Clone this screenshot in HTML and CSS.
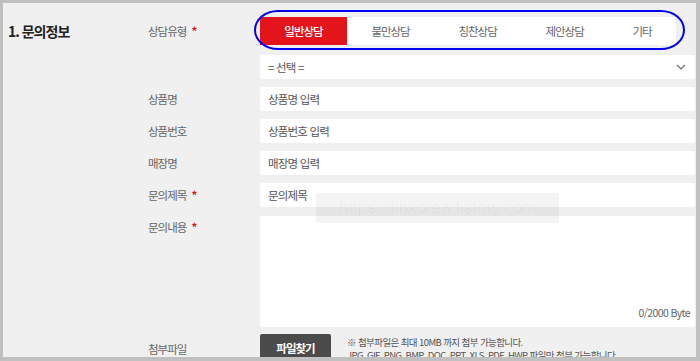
FILE: index.html
```html
<!DOCTYPE html>
<html lang="ko">
<head>
  <meta charset="UTF-8">
  <meta name="viewport" content="width=device-width, initial-scale=1.0">
  <title>문의정보</title>
  <link rel="stylesheet" href="styles.css">
</head>
<body>
  <div class="frame">
    <section class="inquiry">
      <h2 class="section-title">1. 문의정보</h2>

      <div class="form">
        <div class="form-row tab-row">
          <div class="label">상담유형 <span class="req">*</span></div>
          <div class="field">
            <div class="tabs">
              <div class="tab active">일반상담</div>
              <div class="tab">불만상담</div>
              <div class="tab">칭찬상담</div>
              <div class="tab">제안상담</div>
              <div class="tab">기타</div>
            </div>
            <div class="highlight"></div>
          </div>
        </div>

        <div class="form-row">
          <div class="label"></div>
          <div class="field">
            <div class="input select">
              <span>= 선택 =</span>
              <svg class="chevron" width="10" height="6" viewBox="0 0 10 6">
                <path d="M1 1 L5 5 L9 1" fill="none" stroke="#666" stroke-width="1.1"/>
              </svg>
            </div>
          </div>
        </div>

        <div class="form-row">
          <div class="label">상품명</div>
          <div class="field"><div class="input">상품명 입력</div></div>
        </div>

        <div class="form-row">
          <div class="label">상품번호</div>
          <div class="field"><div class="input">상품번호 입력</div></div>
        </div>

        <div class="form-row">
          <div class="label">매장명</div>
          <div class="field"><div class="input">매장명 입력</div></div>
        </div>

        <div class="form-row">
          <div class="label">문의제목 <span class="req">*</span></div>
          <div class="field"><div class="input">문의제목</div></div>
        </div>

        <div class="form-row">
          <div class="label">문의내용 <span class="req">*</span></div>
          <div class="field">
            <div class="textarea">
              <div class="textarea-body"></div>
              <div class="counter">0/2000 Byte</div>
            </div>
          </div>
        </div>

        <div class="form-row file-row">
          <div class="label">첨부파일</div>
          <div class="field file-field">
            <button class="file-button">파일찾기</button>
            <div class="file-note">
              <p>※ 첨부파일은 최대 10MB 까지 첨부 가능합니다.</p>
              <p>JPG, GIF, PNG, BMP, DOC, PPT, XLS, PDF, HWP 파일만 첨부 가능합니다.</p>
            </div>
          </div>
        </div>
      </div>

      <div class="watermark">https://finkorea.tistory.com</div>
    </section>
  </div>
</body>
</html>
```

FILE: styles.css
```css
body {
  margin: 0;
  font-family: "Noto Sans CJK KR", "Noto Sans", sans-serif;
  background-color: #fff;
}

.frame {
  width: 700px;
  height: 361px;
  box-sizing: border-box;
  border-style: solid;
  border-color: #c0c0c0;
  border-width: 3px 4px 4px 3px;
  background-color: #f0f0f0;
  overflow: hidden;
}

.inquiry {
  position: relative;
  display: grid;
  grid-template-columns: 145px 1fr;
  padding: 14px 1px 0 0;
}

.section-title {
  margin: 0;
  padding-left: 5px;
  font-size: 14px;
  font-weight: bold;
  line-height: 28px;
  letter-spacing: -1px;
  color: #222;
}

.form {
  display: flex;
  flex-direction: column;
  gap: 8px;
}

.form-row {
  display: grid;
  grid-template-columns: 112px 1fr;
}

.tab-row {
  margin-bottom: 2px;
}

.label {
  font-size: 11.5px;
  line-height: 24px;
  letter-spacing: -1px;
  color: #666;
}

.tab-row .label,
.file-row .label {
  line-height: 28px;
}

.req {
  margin-left: 3px;
  color: #e4141b;
  font-weight: bold;
}

.field {
  position: relative;
}

/* consult type tabs */
.tabs {
  display: flex;
  height: 28px;
  margin-right: 19px;
  background-color: #fff;
}

.tab {
  flex: 1 1 auto;
  font-size: 11.5px;
  line-height: 28px;
  letter-spacing: -1px;
  text-align: center;
  color: #666;
}

.tab.active {
  background-color: #e4141b;
  color: #fff;
  font-weight: 500;
}

.highlight {
  position: absolute;
  left: -6px;
  top: -7px;
  width: 427px;
  height: 36px;
  border: 2px solid #0000f0;
  border-radius: 24px / 20px;
}

/* inputs */
.input {
  display: flex;
  align-items: center;
  justify-content: space-between;
  height: 24px;
  padding: 0 9px 0 8px;
  background-color: #fff;
  border-radius: 2px;
  font-size: 11.5px;
  letter-spacing: -0.8px;
  color: #555;
}

.textarea {
  display: flex;
  flex-direction: column;
  height: 111px;
  margin-top: 1px;
  background-color: #fff;
  border-radius: 2px;
}

.textarea-body {
  flex: 1;
}

.counter {
  padding: 0 5px 7px 0;
  text-align: right;
  font-size: 10.5px;
  letter-spacing: -0.6px;
  color: #666;
}

/* attachment */
.file-field {
  display: flex;
  align-items: flex-start;
  gap: 16px;
}

.file-button {
  width: 71px;
  height: 28px;
  margin-top: -1px;
  padding: 0;
  border: none;
  border-radius: 2px 2px 0 0;
  background-color: #4b4b4b;
  color: #fff;
  font-family: "Noto Sans CJK KR", sans-serif;
  font-size: 11.5px;
  font-weight: bold;
  letter-spacing: -1px;
}

.file-note {
  padding-top: 1px;
  font-size: 9.5px;
  line-height: 13px;
  letter-spacing: -0.6px;
  color: #555;
}

.file-note p {
  margin: 0;
}

.watermark {
  position: absolute;
  left: 313px;
  top: 190px;
  width: 243px;
  height: 30px;
  background-color: rgba(0, 0, 0, 0.045);
  font-family: "Liberation Sans", Arial, sans-serif;
  font-size: 17px;
  line-height: 30px;
  text-align: center;
  color: rgba(0, 0, 0, 0.035);
  white-space: nowrap;
  overflow: hidden;
}
```
